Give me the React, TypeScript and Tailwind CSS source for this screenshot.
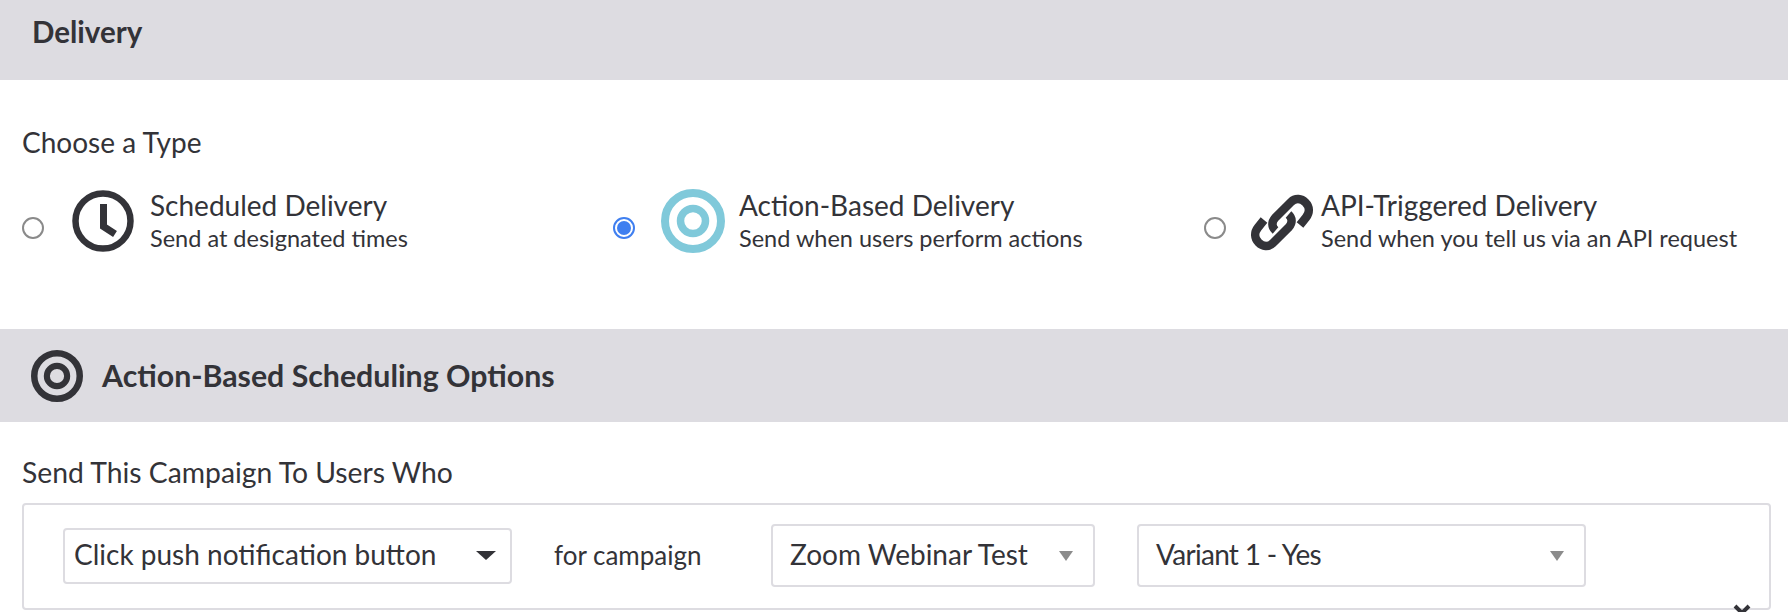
const INK = "#333338";

function ClockIcon() {
  return (
    <svg width="64" height="64" viewBox="0 0 64 64" className="shrink-0">
      <circle cx="31" cy="32" r="27.500" fill="none" stroke={INK} strokeWidth="6.500" />
      <path d="M31.500 15v22.500L43 45" fill="none" stroke={INK} strokeWidth="7" />
    </svg>
  );
}

function TargetIcon({ color, size }: { color: string; size: number }) {
  return (
    <svg width={size} height={size} viewBox="0 0 64 64" className="shrink-0">
      <circle cx="32" cy="32" r="28" fill="none" stroke={color} strokeWidth="8" />
      <circle cx="32" cy="32" r="12.5" fill="none" stroke={color} strokeWidth="7.5" />
    </svg>
  );
}

function LinkIcon() {
  return (
    <svg width="64" height="64" viewBox="3 3 64 64" className="shrink-0">
      <g fill="none" stroke={INK} strokeWidth="8.500">
        <path d="M53 39l6-7.500c4-5 3.500-11-.5-15s-10-5-14.500-.5L28 32c-3.500 4-3.500 9 .5 12.500" />
        <path d="M17 34l-6 7.500c-4 5-3.500 11 .5 15s10 5 14.500.5L42 41c3.500-4 3.500-9-.5-12.500" />
      </g>
    </svg>
  );
}

function Radio({ checked = false }: { checked?: boolean }) {
  return (
    <span
      className={`flex h-[22px] w-[22px] shrink-0 items-center justify-center rounded-full border-2 bg-white ${
        checked ? "border-[#3f7ff0]" : "border-[#8a8a8a]"
      }`}
    >
      {checked && <span className="h-[14px] w-[14px] rounded-full bg-[#3f7ff0]" />}
    </span>
  );
}

type DeliveryOption = {
  title: string;
  sub: string;
  icon: React.ReactNode;
  checked?: boolean;
  width: string;
  gap: string;
  iconGap: string;
};

const OPTIONS: DeliveryOption[] = [
  {
    title: "Scheduled Delivery",
    sub: "Send at designated times",
    icon: <ClockIcon />,
    width: "w-[591px]",
    gap: "gap-[28px]",
    iconGap: "gap-[14px]",
  },
  {
    title: "Action-Based Delivery",
    sub: "Send when users perform actions",
    icon: <TargetIcon color="#80c9da" size={64} />,
    checked: true,
    width: "w-[591px]",
    gap: "gap-[26px]",
    iconGap: "gap-[14px]",
  },
  {
    title: "API-Triggered Delivery",
    sub: "Send when you tell us via an API request",
    icon: <LinkIcon />,
    width: "w-[560px]",
    gap: "gap-[24px]",
    iconGap: "gap-[7px]",
  },
];

function Select({
  label,
  className,
  labelClassName = "",
  dark = false,
}: {
  label: string;
  className: string;
  labelClassName?: string;
  dark?: boolean;
}) {
  return (
    <div className={`flex items-center justify-between rounded-[4px] border-2 border-[#dddce1] bg-white ${className}`}>
      <span className={`pb-[3px] text-[28px] leading-none text-[#333338] ${labelClassName}`}>{label}</span>
      {dark ? (
        <span className="h-0 w-0 border-x-[10px] border-t-[9px] border-x-transparent border-t-[#333338]" />
      ) : (
        <span className="h-0 w-0 border-x-[7px] border-t-[10px] border-x-transparent border-t-[#8c8c8c]" />
      )}
    </div>
  );
}

export default function App() {
  return (
    <div className="relative h-[612px] w-[1788px] overflow-hidden bg-white font-['Lato',sans-serif] text-[#333338]">
      <div className="flex h-[80px] items-center bg-[#dddce1] pb-[15px] pl-[32px] text-[29.500px] font-bold">Delivery</div>

      <div className="h-[249px] pl-[22px] pt-[45px]">
        <div className="text-[28px] leading-[34px]">Choose a Type</div>
        <div className="mt-[29px] flex">
          {OPTIONS.map((o) => (
            <div key={o.title} className={`flex items-center ${o.width} ${o.gap}`}>
              <span className="translate-y-[7px]">
                <Radio checked={o.checked} />
              </span>
              <div className={`flex items-center ${o.iconGap}`}>
                {o.icon}
                <div>
                  <div className="text-[28px] leading-[34px]">{o.title}</div>
                  <div className="text-[23.500px] leading-[32px]">{o.sub}</div>
                </div>
              </div>
            </div>
          ))}
        </div>
      </div>

      <div className="flex h-[93px] items-center gap-[19px] bg-[#dddce1] pl-[31px] text-[30.300px] font-bold">
        <TargetIcon color={INK} size={52} />
        Action-Based Scheduling Options
      </div>

      <div className="pl-[22px] pr-[17px] pt-[33px]">
        <div className="text-[28.300px] leading-[34px]">Send This Campaign To Users Who</div>
        <div className="mt-[14px] flex h-[107px] items-center rounded-[4px] border-2 border-[#dddce1] pb-[2px] pl-[39px]">
          <Select dark label="Click push notification button" className="h-[56px] w-[449px] pl-[9px] pr-[14px]" />
          <span className="ml-[42px] w-[217px] text-[26px]">for campaign</span>
          <Select label="Zoom Webinar Test" className="h-[63px] w-[324px] pl-[17px] pr-[20px]" />
          <Select
            label="Variant 1 - Yes"
            labelClassName="tracking-[-0.7px]"
            className="ml-[42px] h-[63px] w-[449px] pl-[17px] pr-[20px]"
          />
        </div>
      </div>

      <svg width="18" height="12" viewBox="0 0 18 12" className="absolute left-[1733px] top-[604px]">
        <path d="M2 2l14 14M16 2L2 16" stroke={INK} strokeWidth="4" fill="none" />
      </svg>
    </div>
  );
}
